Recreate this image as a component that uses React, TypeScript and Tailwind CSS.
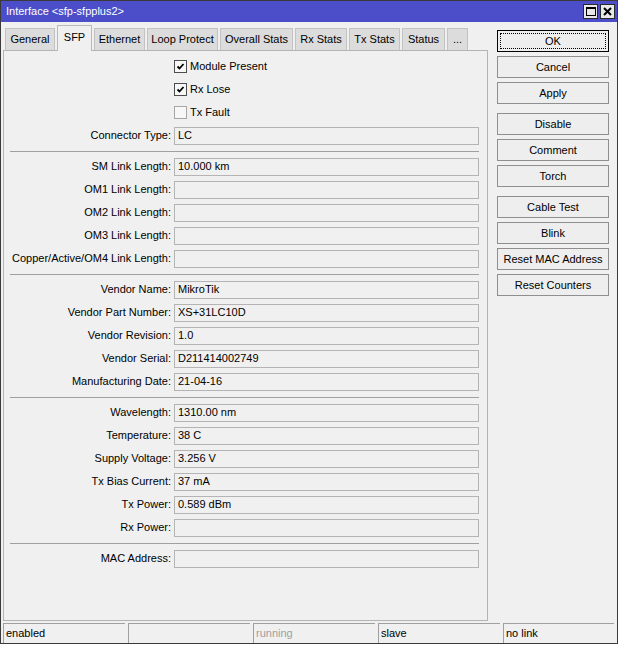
import React from "react";

const font = { fontFamily: '"Liberation Sans", Arial, sans-serif' };

function Field({ label, value }: { label: string; value?: string }) {
  return (
    <div className="flex h-[23px] items-center">
      <div className="w-[167px] text-right whitespace-nowrap text-[11px] text-black">{label}</div>
      <div className="ml-[3px] flex h-[18px] w-[305px] items-center border border-[#b4b4b4] bg-[#f0f0f0] pl-[3px] text-[11px] text-black">
        {value}
      </div>
    </div>
  );
}

function Check({ label, checked }: { label: string; checked: boolean }) {
  return (
    <div className="flex h-[23px] items-center pl-[170px]">
      <div
        className={
          "flex h-[13px] w-[13px] items-center justify-center border bg-[#f7f7f7] " +
          (checked ? "border-[#4d4d4d]" : "border-[#a6a6a6]")
        }
      >
        {checked && (
          <svg width="9" height="9" viewBox="0 0 9 9">
            <path d="M1.5 4.5 L3.5 6.5 L7.5 2" fill="none" stroke="#000" strokeWidth="1.8" />
          </svg>
        )}
      </div>
      <div className="ml-[3px] text-[11px] text-black">{label}</div>
    </div>
  );
}

function Sep() {
  return (
    <div className="flex h-[8px] items-center">
      <div className="ml-[6px] h-px w-[469px] bg-[#a0a0a0]" />
    </div>
  );
}

function Btn({ label, focus }: { label: string; focus?: boolean }) {
  return (
    <div
      className={
        "relative flex h-[22px] w-[112px] items-center justify-center border bg-[#eeeeee] text-[11px] text-black " +
        (focus ? "border-black" : "border-[#8f8f8f]")
      }
    >
      {focus && <div className="absolute inset-[2px] border border-dotted border-black" />}
      {label}
    </div>
  );
}

const tabs: { name: string; w: string; sel?: boolean }[] = [
  { name: "General", w: "w-[50px]" },
  { name: "SFP", w: "w-[35px]", sel: true },
  { name: "Ethernet", w: "w-[51px]" },
  { name: "Loop Protect", w: "w-[71px]" },
  { name: "Overall Stats", w: "w-[73px]" },
  { name: "Rx Stats", w: "w-[52px]" },
  { name: "Tx Stats", w: "w-[51px]" },
  { name: "Status", w: "w-[43px]" },
  { name: "...", w: "w-[21px]" },
];

export default function App() {
  return (
    <div className="h-[648px] w-[620px] bg-white" style={font}>
      <div className="flex h-[644px] w-[618px] flex-col border border-[#3a3a3a] bg-[#f0f0f0]">
        {/* title bar */}
        <div className="flex h-[21px] items-center justify-between bg-[#4b4ec8] pl-[5px] pr-[2px]">
          <div className="text-[11px] text-white">Interface &lt;sfp-sfpplus2&gt;</div>
          <div className="flex gap-[2px]">
            <div className="flex h-[15px] w-[15px] items-center justify-center border border-[#2a2a2a] bg-[#e8e8e8]">
              <div className="h-[9px] w-[10px] border border-t-2 border-black" />
            </div>
            <div className="flex h-[15px] w-[15px] items-center justify-center border border-[#2a2a2a] bg-[#e8e8e8]">
              <svg width="9" height="9" viewBox="0 0 9 9">
                <path d="M1 1 L8 8 M8 1 L1 8" stroke="#000" strokeWidth="2" />
              </svg>
            </div>
          </div>
        </div>

        {/* body */}
        <div className="flex h-[599px] pl-[2px]">
          <div className="flex w-[485px] flex-col">
            <div className="flex h-[28px] items-end gap-[2px] pl-[2px]">
              {tabs.map((t) =>
                t.sel ? (
                  <div
                    key={t.name}
                    className={
                      t.w +
                      " relative -mb-px flex h-[26px] items-center justify-center border border-b-0 border-[#b9b9b9] bg-[#f0f0f0] pb-[2px] text-[11px] text-black"
                    }
                  >
                    {t.name}
                  </div>
                ) : (
                  <div
                    key={t.name}
                    className={
                      t.w +
                      " flex h-[22px] items-center justify-center border border-b-0 border-[#c2c2c2] bg-[#dcdcdc] text-[11px] text-black"
                    }
                  >
                    {t.name}
                  </div>
                )
              )}
            </div>
            <div className="flex flex-1 flex-col border border-[#b4b4b4] bg-[#f0f0f0] pt-[4px]">
              <Check label="Module Present" checked />
              <Check label="Rx Lose" checked />
              <Check label="Tx Fault" checked={false} />
              <Field label="Connector Type:" value="LC" />
              <Sep />
              <Field label="SM Link Length:" value="10.000 km" />
              <Field label="OM1 Link Length:" />
              <Field label="OM2 Link Length:" />
              <Field label="OM3 Link Length:" />
              <Field label="Copper/Active/OM4 Link Length:" />
              <Sep />
              <Field label="Vendor Name:" value="MikroTik" />
              <Field label="Vendor Part Number:" value="XS+31LC10D" />
              <Field label="Vendor Revision:" value="1.0" />
              <Field label="Vendor Serial:" value="D211414002749" />
              <Field label="Manufacturing Date:" value="21-04-16" />
              <Sep />
              <Field label="Wavelength:" value="1310.00 nm" />
              <Field label="Temperature:" value="38 C" />
              <Field label="Supply Voltage:" value="3.256 V" />
              <Field label="Tx Bias Current:" value="37 mA" />
              <Field label="Tx Power:" value="0.589 dBm" />
              <Field label="Rx Power:" />
              <Sep />
              <Field label="MAC Address:" />
            </div>
          </div>

          <div className="ml-[9px] flex flex-col pt-[8px]">
            <div className="flex flex-col gap-[4px]">
              <Btn label="OK" focus />
              <Btn label="Cancel" />
              <Btn label="Apply" />
            </div>
            <div className="mt-[9px] flex flex-col gap-[4px]">
              <Btn label="Disable" />
              <Btn label="Comment" />
              <Btn label="Torch" />
            </div>
            <div className="mt-[9px] flex flex-col gap-[4px]">
              <Btn label="Cable Test" />
              <Btn label="Blink" />
              <Btn label="Reset MAC Address" />
              <Btn label="Reset Counters" />
            </div>
          </div>
        </div>

        {/* status bar */}
        <div className="flex h-[22px] gap-[3px] pl-[2px] pt-[2px]">
          <div className="flex h-[20px] w-[122px] items-center border-l border-t border-[#a0a0a0] pl-[2px] text-[11px] text-black">enabled</div>
          <div className="flex h-[20px] w-[122px] items-center border-l border-t border-[#a0a0a0] pl-[2px] text-[11px] text-black"></div>
          <div className="flex h-[20px] w-[122px] items-center border-l border-t border-[#a0a0a0] pl-[2px] text-[11px] text-[#a0a0a0]">running</div>
          <div className="flex h-[20px] w-[122px] items-center border-l border-t border-[#a0a0a0] pl-[2px] text-[11px] text-black">slave</div>
          <div className="flex h-[20px] w-[111px] items-center border-l border-t border-[#a0a0a0] pl-[2px] text-[11px] text-black">no link</div>
        </div>
      </div>
    </div>
  );
}
